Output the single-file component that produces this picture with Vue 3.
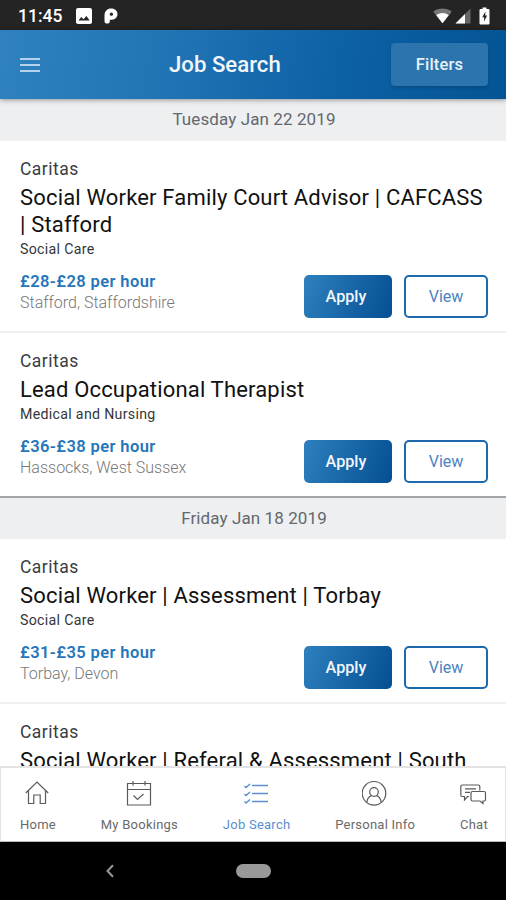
<script setup>
const groups = [
  {
    date: 'Tuesday Jan 22 2019',
    jobs: [
      { title: 'Social Worker Family Court Advisor | CAFCASS | Stafford', sector: 'Social Care', rate: '£28-£28 per hour', place: 'Stafford, Staffordshire' },
      { title: 'Lead Occupational Therapist', sector: 'Medical and Nursing', rate: '£36-£38 per hour', place: 'Hassocks, West Sussex' },
    ],
  },
  {
    date: 'Friday Jan 18 2019',
    jobs: [
      { title: 'Social Worker | Assessment | Torbay', sector: 'Social Care', rate: '£31-£35 per hour', place: 'Torbay, Devon' },
      { title: 'Social Worker | Referal & Assessment | South' },
    ],
  },
]
</script>

<template>
  <div class="phone">
    <div class="status">
      <span class="clock">11:45</span>
      <svg class="s-img" width="16" height="16" viewBox="0 0 16 16">
        <rect width="16" height="16" rx="2" fill="#fff" />
        <path d="M2.5 12.5 5.3 9l2.2 2.3L10.4 8l3.3 4.5z" fill="#242424" />
      </svg>
      <svg class="s-p" width="14" height="16" viewBox="0 0 14 16">
        <path d="M.5 7.500C.5 3.200 3.300.5 7.200.5c3.700 0 6.300 2.300 6.300 5.600 0 3.300-2.400 5.600-5.600 5.600H5.800v1.500c0 1.500-1 2.400-2.600 2.400S.5 14.700.5 13.200z" fill="#fff" />
        <circle cx="7.400" cy="6.200" r="1.600" fill="#242424" />
      </svg>
      <span class="spacer"></span>
      <svg class="s-wifi" width="19" height="16" viewBox="0 0 19 16">
        <path d="M.3 3.7C5.6-.6 13.400-.6 18.700 3.700L9.500 15.200z" fill="#777" />
        <path d="M3.300 7.200c3.800-3 8.600-3 12.400 0L9.500 15.200z" fill="#fff" />
      </svg>
      <svg class="s-cell" width="16" height="16" viewBox="0 0 16 16">
        <path d="M15.500.5v15H.5z" fill="#666" />
        <path d="M10 6v9.500H.5z" fill="#fff" />
      </svg>
      <svg class="s-bat" width="11" height="18" viewBox="0 0 11 18">
        <path d="M1.500 2h2V.5h4V2h2q1 0 1 1v13.500q0 1-1 1h-8q-1 0-1-1V3q0-1 1-1z" fill="#fff" />
        <path d="M6.500 4.500 3.200 10.200h1.900v4.300l3-5.900H6.200z" fill="#242424" />
      </svg>
    </div>

    <header class="header">
      <svg class="burger" width="20" height="16" viewBox="0 0 20 16">
        <path d="M0 2h20M0 8h20M0 14h20" stroke="#b4d2ec" stroke-width="2" />
      </svg>
      <h1>Job Search</h1>
      <button class="filters">Filters</button>
    </header>

    <main class="list">
      <section v-for="g in groups" :key="g.date" class="group">
        <div class="date">{{ g.date }}</div>
        <article v-for="j in g.jobs" :key="j.title" class="job">
          <div class="agency">Caritas</div>
          <h2>{{ j.title }}</h2>
          <div v-if="j.sector" class="sector">{{ j.sector }}</div>
          <div v-if="j.rate" class="foot">
            <div class="info">
              <div class="rate">{{ j.rate }}</div>
              <div class="place">{{ j.place }}</div>
            </div>
            <button class="apply">Apply</button>
            <button class="view">View</button>
          </div>
        </article>
      </section>
    </main>

    <nav class="tabs">
      <a class="tab home">
        <svg width="26" height="26" viewBox="0 0 26 26"><path d="M.8 13 12 2l11.200 11M3.500 11v12.500h5.300V15h6.400v8.500h5.300V11" /></svg>
        <span>Home</span>
      </a>
      <a class="tab bookings">
        <svg width="26" height="26" viewBox="0 0 26 26"><path d="M1.500 3.500h23V25h-23zM1.500 9.500h23M7 1v4.500M19 1v4.500M7.500 15.500l4 4 6-5.500" /></svg>
        <span>My Bookings</span>
      </a>
      <a class="tab search">
        <svg width="26" height="26" viewBox="0 0 26 26">
          <path d="M8 5.500H24M8 13.500H24M8 21.500H24M.5 6l1.500 1.500 4-3.500M.5 14 2 15.500 6 12M.5 21.500 2 23l4-3.500" />
        </svg>
        <span>Job Search</span>
      </a>
      <a class="tab personal">
        <svg width="26" height="26" viewBox="0 0 26 26"><circle cx="12" cy="13.300" r="11.800" /><circle cx="12" cy="12" r="4.300" /><path d="M5 22.600c0-4.500 2.300-6.300 4.800-7.200M19 22.600c0-4.500-2.300-6.300-4.800-7.200" /></svg>
        <span>Personal Info</span>
      </a>
      <a class="tab chat">
        <svg width="28" height="26" viewBox="0 0 28 26"><path d="M9 16.500H7.500l-3 3.500v-3.500H2Q.8 16.500.8 15V6.500Q.8 5 2.300 5h16q1.500 0 1.500 1.500v4M5 8.800h11M5 12.300h5M12.500 11.500h11.500q1.500 0 1.500 1.500v6.500q0 1.500-1.500 1.500h-1v2.500l-3-2.500h-7.500q-1.500 0-1.500-1.500V13q0-1.500 1.500-1.500z" /></svg>
        <span>Chat</span>
      </a>
    </nav>

    <div class="sysbar">
      <svg class="back" width="8" height="14" viewBox="0 0 8 14"><path d="M7 1.200 1.500 7 7 12.800" fill="none" stroke="#999" stroke-width="2" /></svg>
      <span class="pill"></span>
    </div>
  </div>
</template>

<style>
body { background: #fff; }
</style>

<style scoped>
.phone {
  width: 506px;
  height: 900px;
  display: flex;
  flex-direction: column;
  overflow: hidden;
  font-family: Roboto, "Liberation Sans", sans-serif;
  background: #fff;
}
button { font-family: inherit; padding: 0; margin: 0; border: 0; }
h1, h2 { margin: 0; }
svg { display: block; flex: none; }

.status {
  flex: none;
  height: 30px;
  box-sizing: border-box;
  background: #242424;
  color: #fff;
  display: flex;
  align-items: center;
  padding: 1px 16px 0 18px;
}
.clock { font-size: 17.500px; font-weight: 500; width: 58px; }
.s-p { margin-left: 12px; }
.spacer { flex: 1; }
.s-cell { margin-left: 3px; }
.s-bat { margin-left: 8px; }

.header {
  flex: none;
  height: 69px;
  box-sizing: border-box;
  display: flex;
  align-items: center;
  padding: 0 18px 0 20px;
  background: linear-gradient(100deg, #2f81bf 0%, #2275b5 32%, #0d61a5 66%, #035494 100%);
  position: relative;
  z-index: 1;
  box-shadow: 0 1px 5px rgba(0, 0, 0, 0.4);
}
h1 {
  flex: 1;
  padding-left: 129px;
  font-size: 22.200px;
  font-weight: 500;
  line-height: 28px;
  padding-bottom: 2px;
  color: #f1f7fc;
}
.filters {
  width: 97px;
  height: 43px;
  border-radius: 4px;
  background: #2c74ad;
  color: #e6f1fa;
  font-size: 16.500px;
  font-weight: 500;
  letter-spacing: 0.200px;
  box-shadow: 0 2px 3px rgba(0, 0, 0, 0.14);
}

.list { flex: 1; min-height: 0; overflow: hidden; }
.date {
  height: 42px;
  box-sizing: border-box;
  background: #edeff1;
  color: #64686c;
  text-align: center;
  font-size: 17px;
  line-height: 41px;
  letter-spacing: 0.100px;
  padding-left: 2px;
}
.group + .group .date { height: 43px; border-top: 2px solid #a3a6a9; line-height: 41px; }
.job { padding: 17px 18px 13px 20px; border-bottom: 2px solid #eff0f1; }
.job:last-child { border-bottom: 0; }
.agency { font-size: 17.500px; line-height: 22px; letter-spacing: 0.480px; color: #3a3d42; }
h2 { margin-top: 4px; font-size: 22px; line-height: 27px; font-weight: 400; letter-spacing: 0.170px; color: #111; }
.sector { font-size: 14.200px; line-height: 20px; letter-spacing: 0.300px; color: #33363a; margin-top: 1px; }
.foot { display: flex; align-items: flex-end; margin-top: 12px; }
.info { flex: 1; height: 47px; }
.rate { font-size: 16.500px; line-height: 22px; font-weight: 600; letter-spacing: 0.400px; color: #2576ba; }
.place { font-size: 16px; line-height: 20px; font-weight: 300; color: #777; }
.apply {
  width: 88px;
  height: 43px;
  padding-right: 4px;
  border-radius: 5px;
  background: linear-gradient(110deg, #2e80be, #044f92);
  color: #f1f7fc;
  font-size: 16.200px;
  font-weight: 500;
}
.view {
  width: 84px;
  height: 43px;
  margin-left: 12px;
  border: 2px solid #1c69ad;
  border-radius: 5px;
  background: #fff;
  color: #4a83bf;
  font-size: 16px;
}

.tabs {
  flex: none;
  height: 76px;
  box-sizing: border-box;
  border: 1px solid #e3e3e3;
  border-top-width: 2px;
  border-bottom: 1px solid #bbb;
  background: #fff;
  display: flex;
  justify-content: space-between;
  padding: 12px 17px 0 19px;
}
.tab {
  display: flex;
  flex-direction: column;
  align-items: center;
  gap: 9px;
  font-size: 13px;
  line-height: 20px;
  letter-spacing: 0.250px;
  color: #6a6a6a;
}
.tab svg { fill: none; stroke: #5a5a5a; stroke-width: 1.200; }
.search { color: #5a90d0; }
.search svg { stroke: #5a90d0; stroke-width: 1.500; }

.sysbar { flex: none; height: 58px; background: #000; display: flex; align-items: center; padding-left: 106px; }
.pill { width: 35px; height: 14px; border-radius: 7px; background: #999; margin-left: 122px; }
</style>
